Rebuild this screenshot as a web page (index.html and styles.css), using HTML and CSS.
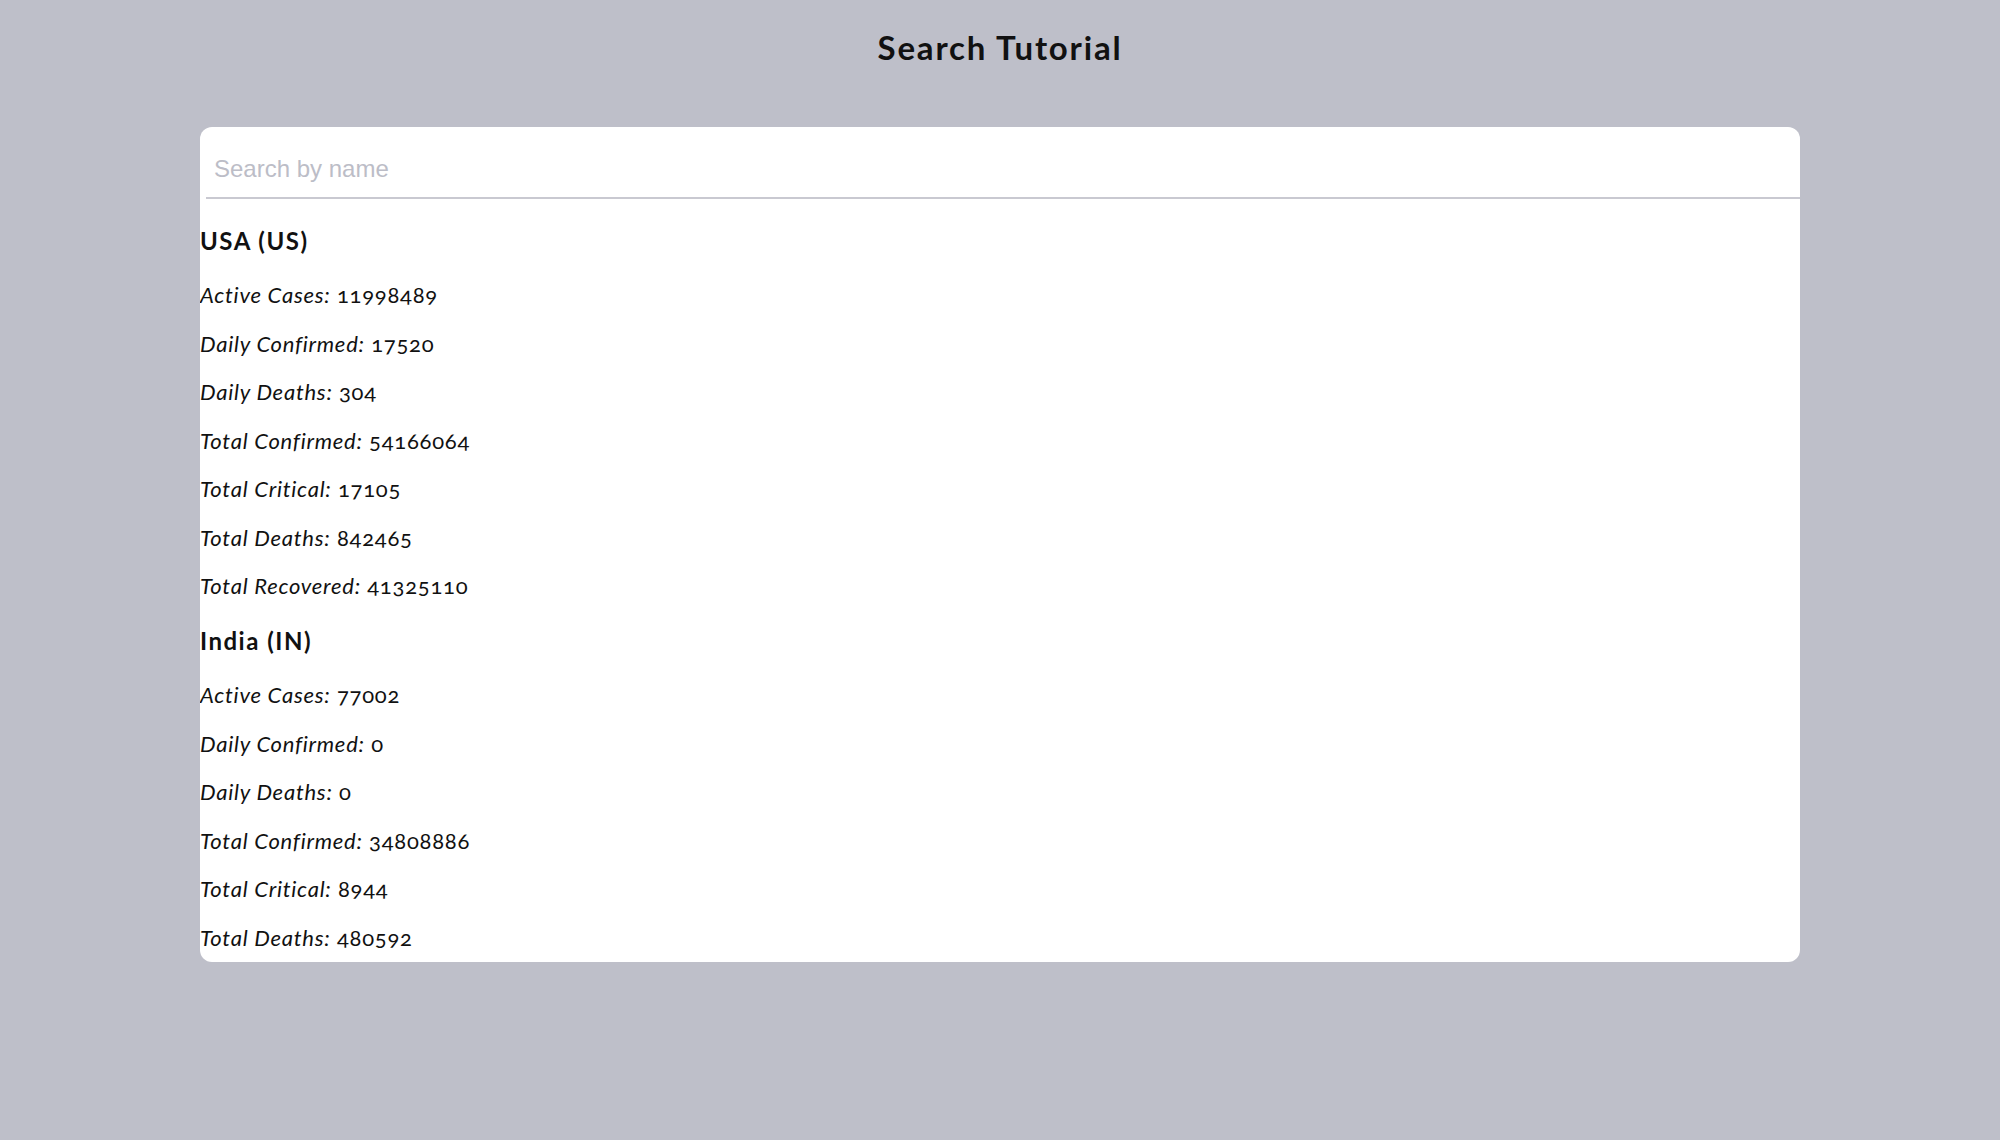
FILE: index.html
```html
<!DOCTYPE html>
<html lang="en">
<head>
<meta charset="utf-8">
<title>Search Tutorial</title>
<link rel="stylesheet" href="styles.css">
</head>
<body>
<h1 class="title">Search Tutorial</h1>
<main class="card">
  <input class="search" type="text" placeholder="Search by name">
  <div class="list">
    <section class="country">
      <h3 class="country-name">USA (US)</h3>
      <p class="stat"><em>Active Cases:</em> 11998489</p>
      <p class="stat"><em>Daily Confirmed:</em> 17520</p>
      <p class="stat"><em>Daily Deaths:</em> 304</p>
      <p class="stat"><em>Total Confirmed:</em> 54166064</p>
      <p class="stat"><em>Total Critical:</em> 17105</p>
      <p class="stat"><em>Total Deaths:</em> 842465</p>
      <p class="stat"><em>Total Recovered:</em> 41325110</p>
    </section>
    <section class="country">
      <h3 class="country-name">India (IN)</h3>
      <p class="stat"><em>Active Cases:</em> 77002</p>
      <p class="stat"><em>Daily Confirmed:</em> 0</p>
      <p class="stat"><em>Daily Deaths:</em> 0</p>
      <p class="stat"><em>Total Confirmed:</em> 34808886</p>
      <p class="stat"><em>Total Critical:</em> 8944</p>
      <p class="stat"><em>Total Deaths:</em> 480592</p>
    </section>
  </div>
</main>
</body>
</html>
```
FILE: styles.css
```css
html, body {
  margin: 0;
  padding: 0;
}
body {
  background: #bebfc9;
  font-family: Lato, "Open Sans", sans-serif;
  color: #111;
  font-variant-numeric: oldstyle-nums;
}
.title {
  margin: 0;
  padding-top: 27px;
  height: 40px;
  line-height: 40px;
  font-size: 33px;
  font-weight: 700;
  letter-spacing: 1.8px;
  text-align: center;
  color: #111;
}
.card {
  box-sizing: border-box;
  width: 1600px;
  height: 835px;
  margin: 60px auto 0;
  background: #fff;
  border-radius: 12px;
  overflow: hidden;
}
.search {
  display: block;
  box-sizing: border-box;
  width: calc(100% - 6px);
  height: 72px;
  margin: 0 0 0 6px;
  padding: 14px 8px 0;
  border: none;
  border-bottom: 2px solid #c9c9d1;
  outline: none;
  background: transparent;
  font-family: "Liberation Sans", Arial, sans-serif;
  font-size: 24px;
  color: #111;
}
.search::placeholder {
  color: #bcbdc7;
}
.list {
  padding-top: 29px;
  display: flex;
  flex-direction: column;
  gap: 29px;
}
.country {
  display: flex;
  flex-direction: column;
  gap: 22.5px;
}
.country-name {
  margin: 0 0 5.5px;
  font-size: 24px;
  line-height: 26px;
  font-weight: 700;
  letter-spacing: 1.5px;
}
.stat {
  margin: 0;
  font-size: 22px;
  line-height: 26px;
  font-weight: 400;
  letter-spacing: 0.75px;
}
.stat em {
  font-style: italic;
}
```
